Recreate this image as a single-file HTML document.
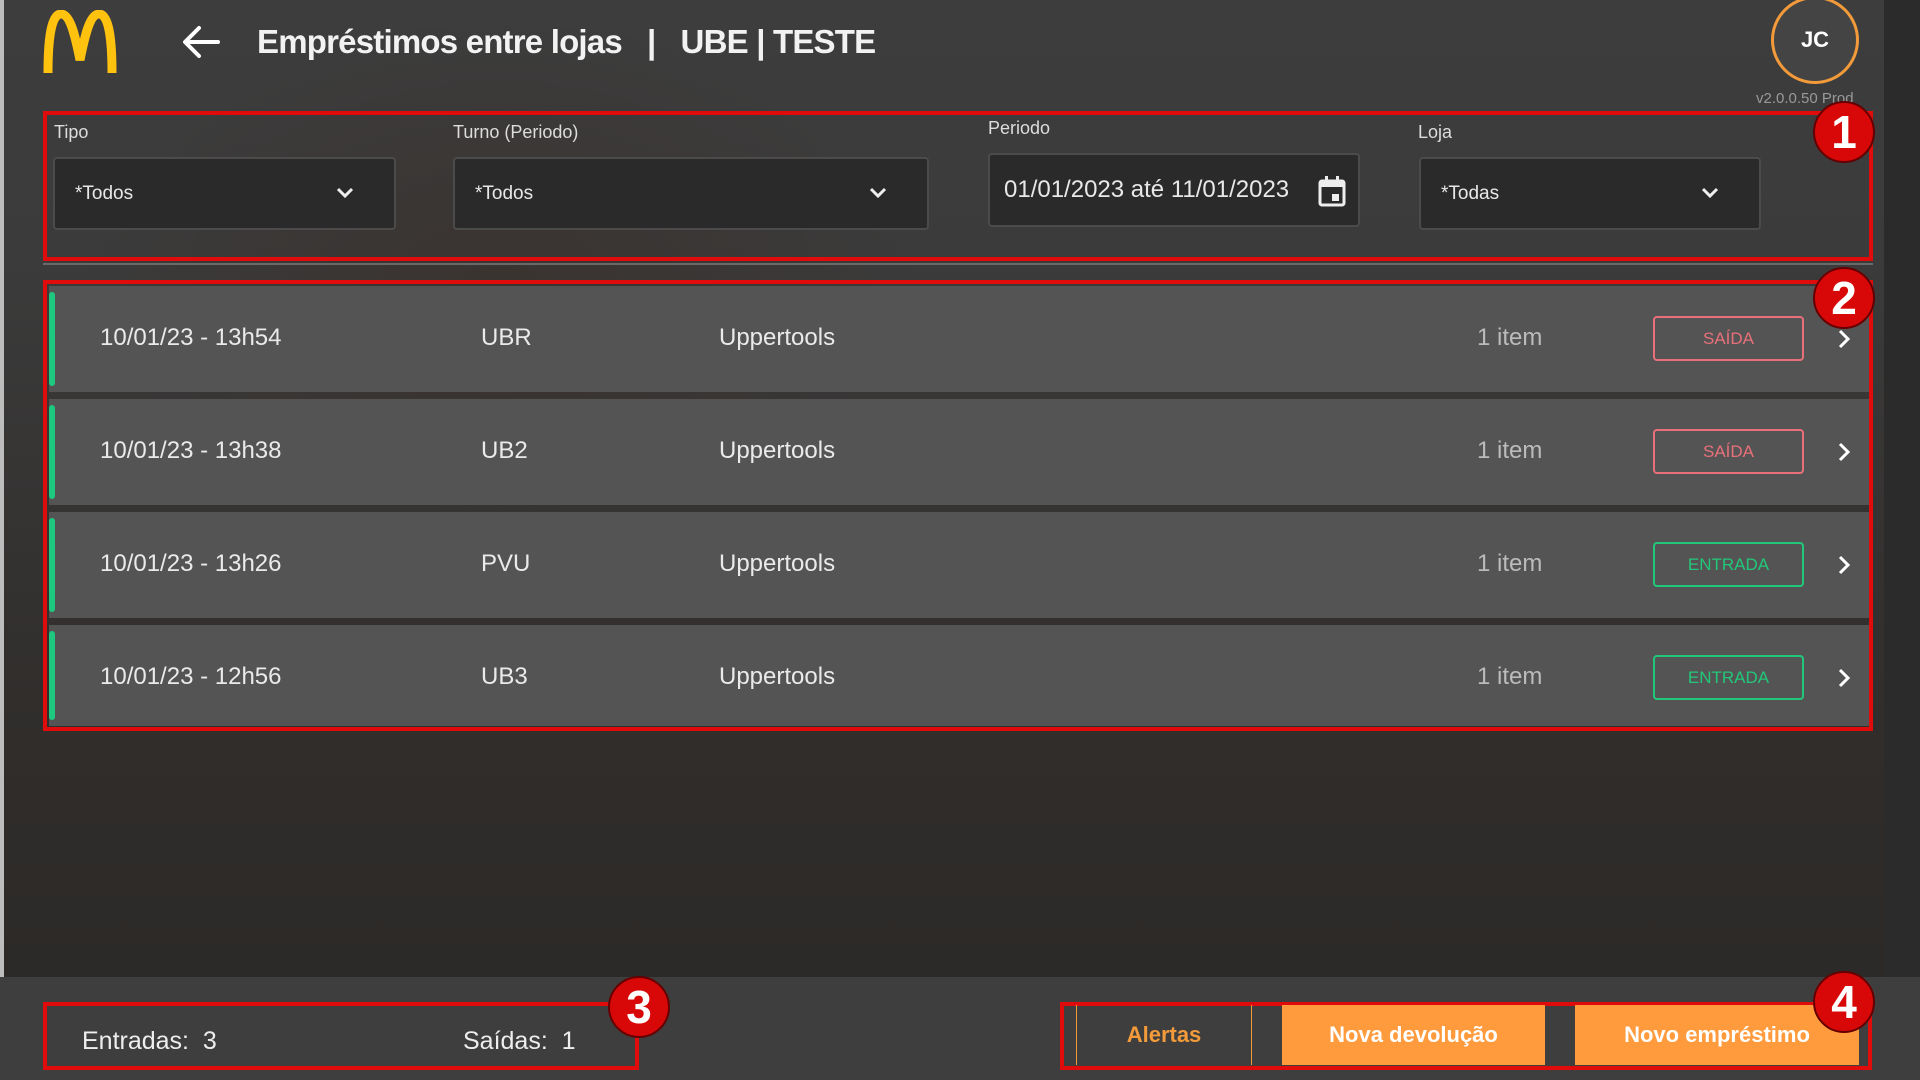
<!DOCTYPE html>
<html><head><meta charset="utf-8"><style>
*{margin:0;padding:0;box-sizing:border-box}
body{width:1920px;height:1080px;overflow:hidden;font-family:"Liberation Sans",sans-serif;color:#eee;position:relative;
background:radial-gradient(ellipse 600px 400px at 500px 300px,#3a3330 0%,rgba(0,0,0,0) 70%),linear-gradient(#3d3d3d 0,#3b3b3b 260px,#302d2b 740px,#2c2a28 977px);}
.abs{position:absolute}
.leftstrip{left:0;top:0;width:4px;height:1080px;background:#bdbdbd}
.rightstrip{left:1884px;top:0;width:36px;height:1080px;background:#2b2b2b}
.title{left:257px;top:23px;font-size:33px;font-weight:bold;color:#f2f2f2;letter-spacing:-0.8px;white-space:pre}
.avatar{left:1771px;top:-4px;width:88px;height:88px;border:3px solid #f39a3a;border-radius:50%;background:#444;display:flex;align-items:center;justify-content:center;font-weight:bold;font-size:22px;color:#fff}
.ver{left:1756px;top:90px;font-size:15px;color:#999}
.red{border:4px solid #e00c0c}
.lbl{font-size:18px;color:#ddd}
.sel{background:#2a2a2a;border:2px solid #4b4b4b;border-radius:4px;font-size:19px;color:#e8e8e8;display:flex;align-items:center;padding-left:20px}
.chev{position:absolute;right:40px;top:50%;margin-top:-8px}
.sep{left:43px;top:263px;width:1830px;height:2px;background:#6a6a6a}
.row{left:49px;width:1820px;height:106px;background:#545454;font-size:24px;color:#eaeaea}
.row .g{position:absolute;left:0;top:6px;width:6px;height:94px;background:#1ec97f;border-radius:3px}
.row span{position:absolute;top:38px}
.badge{position:absolute;left:1604px;top:30px;width:151px;height:45px;border:2px solid;border-radius:4px;font-size:17px;display:flex;align-items:center;justify-content:center}
.s{border-color:#e8707a;color:#e8707a}
.e{border-color:#22c87a;color:#22c87a}
.arr{position:absolute;left:1788px;top:42px}
.footer{left:0;top:977px;width:1920px;height:103px;background:#3e3e3e}
.num{width:62px;height:62px;border-radius:50%;background:#d80808;color:#fff;font-weight:bold;font-size:46px;display:flex;align-items:center;justify-content:center;border:2px solid #600}
.btn{top:1005px;height:60px;display:flex;align-items:center;justify-content:center;font-size:22px;font-weight:bold}
</style></head><body>
<div class="abs leftstrip"></div>
<div class="abs rightstrip"></div>
<svg class="abs" style="left:42px;top:10px" width="76" height="64" viewBox="0 0 76 64"><path d="M6 63 C6 30 9 4 19 4 C29 4 34 30 38 50 C42 30 47 4 57 4 C67 4 70 30 70 63" fill="none" stroke="#ffc20e" stroke-width="9"/></svg>
<svg class="abs" style="left:181px;top:24px" width="40" height="36" viewBox="0 0 40 36"><path d="M37 18H5M18 4L4 18L18 32" fill="none" stroke="#fff" stroke-width="4" stroke-linecap="round" stroke-linejoin="round"/></svg>
<div class="abs title">Empréstimos entre lojas   |   UBE | TESTE</div>
<div class="abs avatar">JC</div>
<div class="abs ver">v2.0.0.50 Prod</div>

<div class="abs red" style="left:43px;top:111px;width:1830px;height:150px"></div>
<div class="abs lbl" style="left:54px;top:122px">Tipo</div>
<div class="abs sel" style="left:53px;top:157px;width:343px;height:73px">*Todos<svg class="chev" width="18" height="14" viewBox="0 0 18 14"><path d="M2 3L9 10L16 3" fill="none" stroke="#eee" stroke-width="3"/></svg></div>
<div class="abs lbl" style="left:453px;top:122px">Turno (Periodo)</div>
<div class="abs sel" style="left:453px;top:157px;width:476px;height:73px">*Todos<svg class="chev" width="18" height="14" viewBox="0 0 18 14"><path d="M2 3L9 10L16 3" fill="none" stroke="#eee" stroke-width="3"/></svg></div>
<div class="abs lbl" style="left:988px;top:118px">Periodo</div>
<div class="abs sel" style="left:988px;top:153px;width:372px;height:74px;font-size:24px;padding-left:14px">01/01/2023 até 11/01/2023<svg style="position:absolute;right:12px;top:20px" width="28" height="32" viewBox="0 0 28 32"><rect x="2" y="6" width="24" height="24" rx="2" fill="none" stroke="#eee" stroke-width="3"/><rect x="2" y="6" width="24" height="6" fill="#eee"/><rect x="7" y="1" width="3" height="7" fill="#eee"/><rect x="18" y="1" width="3" height="7" fill="#eee"/><rect x="14" y="19" width="7" height="7" fill="#eee"/></svg></div>
<div class="abs lbl" style="left:1418px;top:122px">Loja</div>
<div class="abs sel" style="left:1419px;top:157px;width:342px;height:73px">*Todas<svg class="chev" width="18" height="14" viewBox="0 0 18 14"><path d="M2 3L9 10L16 3" fill="none" stroke="#eee" stroke-width="3"/></svg></div>
<div class="abs sep"></div>

<div class="abs red" style="left:43px;top:280px;width:1830px;height:451px"></div>
<div class="abs row" style="top:286px"><div class="g"></div><span style="left:51px">10/01/23 - 13h54</span><span style="left:432px">UBR</span><span style="left:670px">Uppertools</span><span style="left:1428px;color:#bbb">1 item</span><div class="badge s">SAÍDA</div><svg class="arr" width="14" height="22" viewBox="0 0 14 22"><path d="M3 3L11 11L3 19" fill="none" stroke="#fff" stroke-width="3"/></svg></div>
<div class="abs row" style="top:399px"><div class="g"></div><span style="left:51px">10/01/23 - 13h38</span><span style="left:432px">UB2</span><span style="left:670px">Uppertools</span><span style="left:1428px;color:#bbb">1 item</span><div class="badge s">SAÍDA</div><svg class="arr" width="14" height="22" viewBox="0 0 14 22"><path d="M3 3L11 11L3 19" fill="none" stroke="#fff" stroke-width="3"/></svg></div>
<div class="abs row" style="top:512px"><div class="g"></div><span style="left:51px">10/01/23 - 13h26</span><span style="left:432px">PVU</span><span style="left:670px">Uppertools</span><span style="left:1428px;color:#bbb">1 item</span><div class="badge e">ENTRADA</div><svg class="arr" width="14" height="22" viewBox="0 0 14 22"><path d="M3 3L11 11L3 19" fill="none" stroke="#fff" stroke-width="3"/></svg></div>
<div class="abs row" style="top:625px;height:101px"><div class="g" style="height:89px"></div><span style="left:51px">10/01/23 - 12h56</span><span style="left:432px">UB3</span><span style="left:670px">Uppertools</span><span style="left:1428px;color:#bbb">1 item</span><div class="badge e">ENTRADA</div><svg class="arr" width="14" height="22" viewBox="0 0 14 22"><path d="M3 3L11 11L3 19" fill="none" stroke="#fff" stroke-width="3"/></svg></div>

<div class="abs footer"></div>
<div class="abs red" style="left:43px;top:1002px;width:596px;height:68px"></div>
<div class="abs" style="left:82px;top:1027px;font-size:25px;color:#eee;white-space:pre">Entradas:  3</div>
<div class="abs" style="left:463px;top:1027px;font-size:25px;color:#eee;white-space:pre">Saídas:  1</div>
<div class="abs red" style="left:1060px;top:1002px;width:812px;height:68px"></div>
<div class="abs btn" style="left:1076px;width:176px;border-left:1px solid #f39a3a;border-right:1px solid #f39a3a;color:#f39a3a">Alertas</div>
<div class="abs btn" style="left:1282px;width:263px;background:#ff9b3d;color:#fff">Nova devolução</div>
<div class="abs btn" style="left:1575px;width:284px;background:#ff9b3d;color:#fff">Novo empréstimo</div>

<div class="abs num" style="left:1813px;top:101px">1</div>
<div class="abs num" style="left:1813px;top:267px">2</div>
<div class="abs num" style="left:608px;top:976px">3</div>
<div class="abs num" style="left:1813px;top:971px">4</div>
</body></html>
